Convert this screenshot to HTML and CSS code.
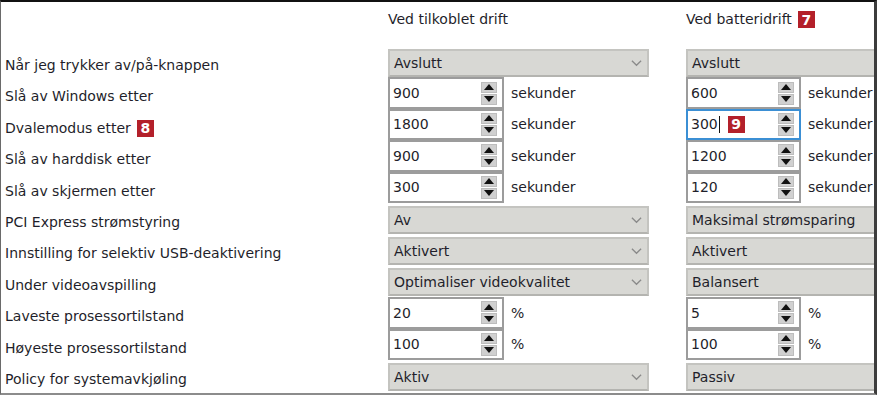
FILE: index.html
```html
<!DOCTYPE html>
<html lang="no">
<head>
    <meta charset="UTF-8">
    <meta name="viewport" content="width=device-width, initial-scale=1.0">
    <title>Strømalternativer</title>
    <link rel="stylesheet" href="styles.css">
</head>
<body>
    <div class="frame">
        <div class="sheet">
            <div class="head"></div>
            <div class="head">Ved tilkoblet drift</div>
            <div class="head">Ved batteridrift <span class="badge">7</span></div>

            <div class="label">Når jeg trykker av/på-knappen</div>
            <div class="cell"><div class="select"><span>Avslutt</span><svg class="chev" viewBox="0 0 12 8"><path d="M1 1.5 6 6.5 11 1.5"/></svg></div></div>
            <div class="cell"><div class="select"><span>Avslutt</span></div></div>

            <div class="label">Slå av Windows etter</div>
            <div class="cell"><div class="spin"><span class="val">900</span><span class="arrows"><i class="up"></i><i class="down"></i></span></div><span class="unit">sekunder</span></div>
            <div class="cell"><div class="spin"><span class="val">600</span><span class="arrows"><i class="up"></i><i class="down"></i></span></div><span class="unit">sekunder</span></div>

            <div class="label">Dvalemodus etter <span class="badge">8</span></div>
            <div class="cell"><div class="spin"><span class="val">1800</span><span class="arrows"><i class="up"></i><i class="down"></i></span></div><span class="unit">sekunder</span></div>
            <div class="cell"><div class="spin focus"><span class="val">300<b class="caret"></b><span class="badge">9</span></span><span class="arrows"><i class="up"></i><i class="down"></i></span></div><span class="unit">sekunder</span></div>

            <div class="label">Slå av harddisk etter</div>
            <div class="cell"><div class="spin"><span class="val">900</span><span class="arrows"><i class="up"></i><i class="down"></i></span></div><span class="unit">sekunder</span></div>
            <div class="cell"><div class="spin"><span class="val">1200</span><span class="arrows"><i class="up"></i><i class="down"></i></span></div><span class="unit">sekunder</span></div>

            <div class="label">Slå av skjermen etter</div>
            <div class="cell"><div class="spin"><span class="val">300</span><span class="arrows"><i class="up"></i><i class="down"></i></span></div><span class="unit">sekunder</span></div>
            <div class="cell"><div class="spin"><span class="val">120</span><span class="arrows"><i class="up"></i><i class="down"></i></span></div><span class="unit">sekunder</span></div>

            <div class="label">PCI Express strømstyring</div>
            <div class="cell"><div class="select"><span>Av</span><svg class="chev" viewBox="0 0 12 8"><path d="M1 1.5 6 6.5 11 1.5"/></svg></div></div>
            <div class="cell"><div class="select"><span>Maksimal strømsparing</span></div></div>

            <div class="label">Innstilling for selektiv USB-deaktivering</div>
            <div class="cell"><div class="select"><span>Aktivert</span><svg class="chev" viewBox="0 0 12 8"><path d="M1 1.5 6 6.5 11 1.5"/></svg></div></div>
            <div class="cell"><div class="select"><span>Aktivert</span></div></div>

            <div class="label">Under videoavspilling</div>
            <div class="cell"><div class="select"><span>Optimaliser videokvalitet</span><svg class="chev" viewBox="0 0 12 8"><path d="M1 1.5 6 6.5 11 1.5"/></svg></div></div>
            <div class="cell"><div class="select"><span>Balansert</span></div></div>

            <div class="label">Laveste prosessortilstand</div>
            <div class="cell"><div class="spin"><span class="val">20</span><span class="arrows"><i class="up"></i><i class="down"></i></span></div><span class="unit">%</span></div>
            <div class="cell"><div class="spin"><span class="val">5</span><span class="arrows"><i class="up"></i><i class="down"></i></span></div><span class="unit">%</span></div>

            <div class="label">Høyeste prosessortilstand</div>
            <div class="cell"><div class="spin"><span class="val">100</span><span class="arrows"><i class="up"></i><i class="down"></i></span></div><span class="unit">%</span></div>
            <div class="cell"><div class="spin"><span class="val">100</span><span class="arrows"><i class="up"></i><i class="down"></i></span></div><span class="unit">%</span></div>

            <div class="label">Policy for systemavkjøling</div>
            <div class="cell"><div class="select"><span>Aktiv</span><svg class="chev" viewBox="0 0 12 8"><path d="M1 1.5 6 6.5 11 1.5"/></svg></div></div>
            <div class="cell"><div class="select"><span>Passiv</span></div></div>

            <div class="label"></div>
            <div class="cell"><div class="select"></div></div>
            <div class="cell"><div class="select"></div></div>
        </div>
    </div>
</body>
</html>
```

FILE: styles.css
```css
* {
    margin: 0;
    padding: 0;
    box-sizing: border-box;
}

body {
    background: #fff;
    font-family: 'DejaVu Sans', sans-serif;
    font-size: 14px;
    color: #1f1f2b;
}

.frame {
    width: 877px;
    height: 395px;
    border-top: 2px solid #111;
    border-left: 1px solid #6a6a6a;
    border-right: 3px solid #3c3c3c;
    border-bottom: 2px solid #8c8c8c;
    overflow: hidden;
    background: #fff;
}

.sheet {
    display: grid;
    grid-template-columns: 387px 298px 300px;
    grid-template-rows: 44px repeat(12, 31.4px);
}

.head {
    padding-top: 9px;
    display: flex;
    align-items: flex-start;
    gap: 6px;
}

.label {
    padding-left: 4px;
    padding-top: 11px;
    display: flex;
    align-items: flex-start;
    gap: 6px;
    white-space: nowrap;
}

.cell {
    display: flex;
    align-items: center;
    white-space: nowrap;
}

.badge {
    display: inline-flex;
    align-items: center;
    justify-content: center;
    width: 17px;
    height: 17px;
    background: #b3202a;
    color: #fff;
    font-weight: bold;
    font-size: 14px;
    line-height: 1;
}

.select {
    width: 261px;
    height: 28px;
    margin-top: 2px;
    background: #d8d8d4;
    border: 2px solid #c4c4c0;
    border-bottom-color: #b4b4b0;
    display: flex;
    align-items: center;
    justify-content: space-between;
    padding: 0 5px 0 4px;
}

.chev {
    width: 11px;
    height: 8px;
    fill: none;
    stroke: #8a8a8a;
    stroke-width: 1.4;
}

.spin {
    width: 116px;
    height: 31.4px;
    border: 2px solid #9c9c9c;
    background: #fff;
    display: flex;
    align-items: center;
    justify-content: space-between;
    padding: 0 5px 0 3px;
}

.cell + .cell .spin {
    width: 115px;
}

.spin.focus {
    border-color: #3b8fd4;
}

.val {
    display: flex;
    align-items: center;
}

.caret {
    width: 1px;
    height: 17px;
    background: #111;
    margin-left: 1px;
    margin-right: 8px;
}

.arrows {
    display: flex;
    flex-direction: column;
    gap: 1px;
}

.arrows i {
    width: 16px;
    height: 11px;
    background: #d0d0d0;
    border: 1px solid #bdbdbd;
    display: flex;
    align-items: center;
    justify-content: center;
}

.arrows i::after {
    content: '';
    border-left: 5px solid transparent;
    border-right: 5px solid transparent;
}

.arrows .up::after {
    border-bottom: 6px solid #111;
}

.arrows .down::after {
    border-top: 6px solid #111;
}

.unit {
    margin-left: 7px;
}
```
